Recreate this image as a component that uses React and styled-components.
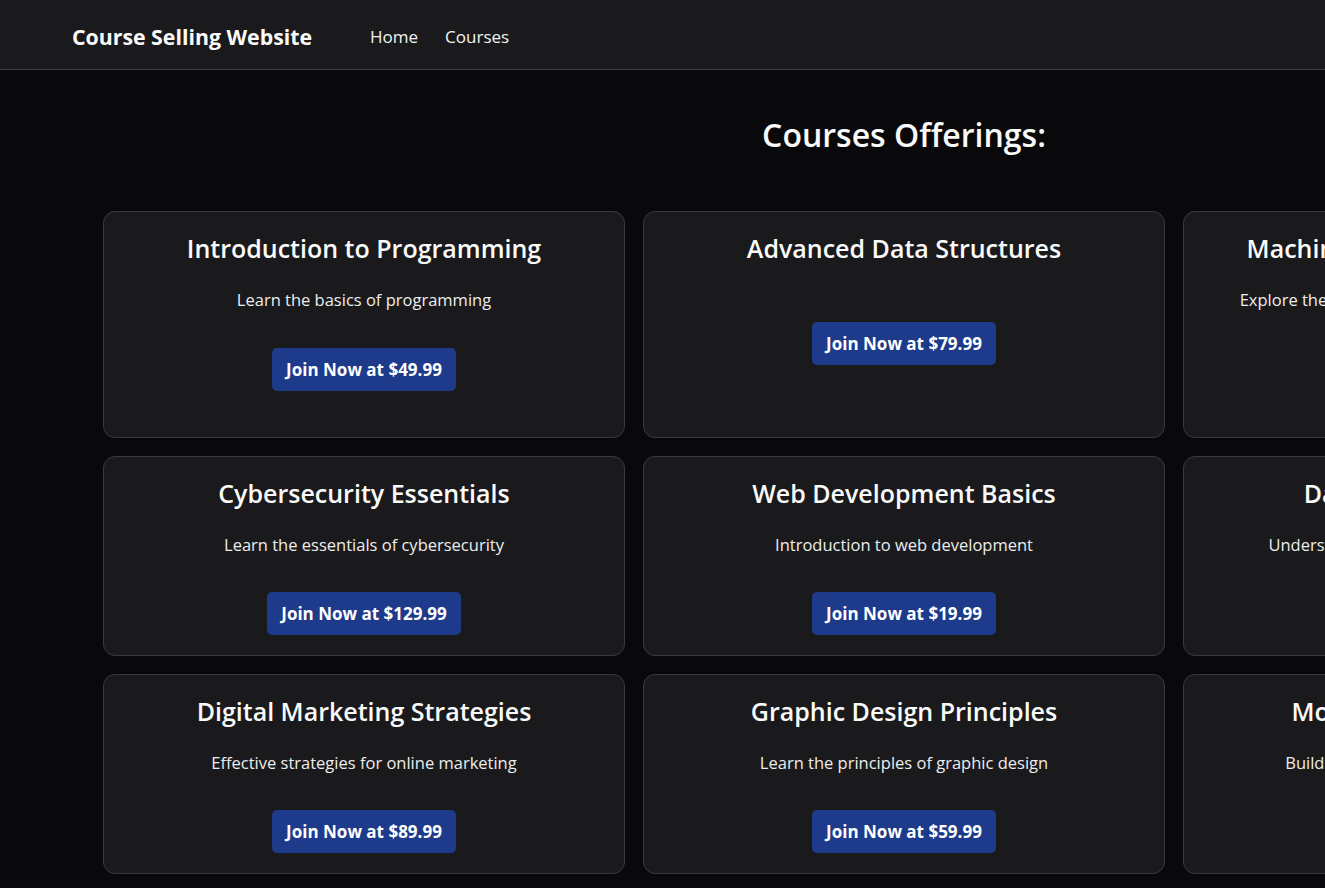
import React from "react";
import styled, { createGlobalStyle } from "styled-components";

const GlobalStyle = createGlobalStyle`
	* {
		box-sizing: border-box;
	}
	body {
		margin: 0;
		background: #09090b;
		color: #fafafa;
		font-family: "Open Sans", "Noto Sans", sans-serif;
		overflow: hidden;
	}
`;

const courses = [
	{ title: "Introduction to Programming", description: "Learn the basics of programming", price: 49.99 },
	{ title: "Advanced Data Structures", description: "", price: 79.99 },
	{
		title: "Machine Learning Fundamentals",
		description: "Explore the fundamentals of machine learning and AI techniques",
		price: 99.99,
	},
	{ title: "Cybersecurity Essentials", description: "Learn the essentials of cybersecurity", price: 129.99 },
	{ title: "Web Development Basics", description: "Introduction to web development", price: 19.99 },
	{ title: "Database Management", description: "Understand the fundamentals of data science", price: 69.99 },
	{ title: "Digital Marketing Strategies", description: "Effective strategies for online marketing", price: 89.99 },
	{ title: "Graphic Design Principles", description: "Learn the principles of graphic design", price: 59.99 },
	{ title: "Mobile App Development", description: "Building mobile apps for iOS and Android", price: 109.99 },
];

const Page = styled.div`
	min-height: 100vh;
	width: 100vw;
`;

const Navbar = styled.nav`
	height: 70px;
	background: #1a1a1c;
	border-bottom: 1px solid #3a3d45;
	display: flex;
	align-items: center;
	padding: 3px 72px 0;
`;

const Logo = styled.a`
	font-size: 21.3px;
	font-weight: 700;
	color: #fafafa;
	text-decoration: none;
	margin-right: 58px;
`;

const NavLinks = styled.div`
	display: flex;
	gap: 27px;
`;

const NavLink = styled.a`
	font-size: 17px;
	color: #f2f2f2;
	text-decoration: none;
`;

const Main = styled.main`
	padding: 45px 0 0 103px;
	width: max-content;
`;

const Heading = styled.h1`
	margin: 0 0 56px;
	font-size: 32px;
	line-height: 40px;
	font-weight: 600;
	text-align: center;
`;

const Grid = styled.div`
	display: grid;
	grid-template-columns: repeat(3, 522px);
	gap: 18px;
`;

const Card = styled.div`
	background: #1a1a1c;
	border: 1px solid #3a3a3e;
	border-radius: 12px;
	padding: 20px 20px 19.5px;
	display: flex;
	flex-direction: column;
	align-items: center;
	text-align: center;
`;

const Title = styled.h2`
	margin: 0 0 23px;
	font-size: 25px;
	line-height: 32px;
	font-weight: 600;
`;

const Description = styled.p`
	margin: 0 0 ${(p) => (p.$empty ? "35px" : "34px")};
	font-size: 16.5px;
	line-height: 26.5px;
	color: #ededed;
`;

const JoinButton = styled.button`
	background: #1e3a8a;
	color: #fff;
	border: none;
	border-radius: 5px;
	height: 43px;
	padding: 0 14px;
	font-family: inherit;
	font-size: 17px;
	font-weight: 700;
	cursor: pointer;
`;

const CourseCard = ({ title, description, price }) => (
	<Card>
		<Title>{title}</Title>
		<Description $empty={!description}>{description}</Description>
		<JoinButton>Join Now at ${price}</JoinButton>
	</Card>
);

const App = () => {
	return (
		<Page>
			<GlobalStyle />
			<Navbar>
				<Logo href="#">Course Selling Website</Logo>
				<NavLinks>
					<NavLink href="#">Home</NavLink>
					<NavLink href="#">Courses</NavLink>
				</NavLinks>
			</Navbar>
			<Main>
				<Heading>Courses Offerings:</Heading>
				<Grid>
					{courses.map((course) => (
						<CourseCard key={course.title} {...course} />
					))}
				</Grid>
			</Main>
		</Page>
	);
};

export default App;
